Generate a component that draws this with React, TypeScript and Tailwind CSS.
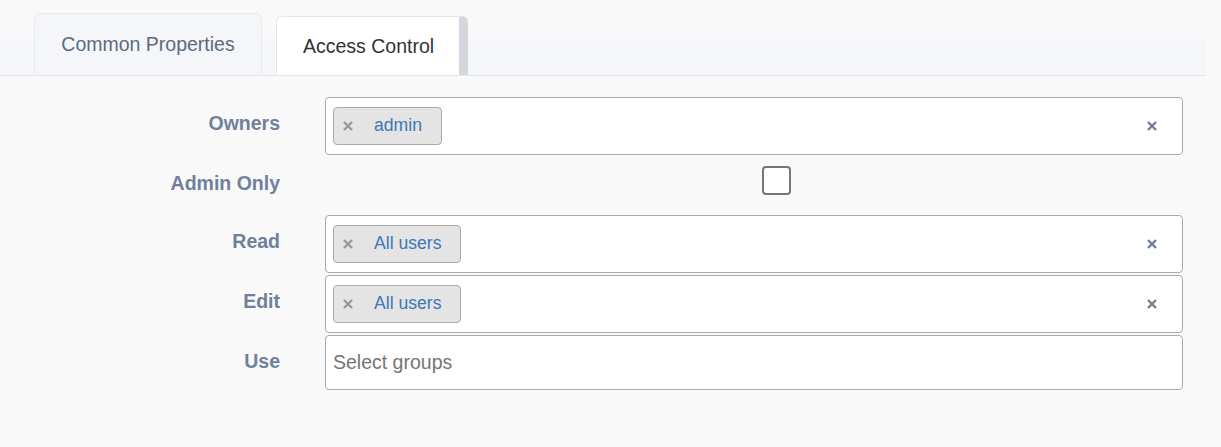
import React from "react";

const Cross: React.FC<{ className?: string; size?: number }> = ({
  className = "",
  size = 10,
}) => (
  <svg
    width={size}
    height={size}
    viewBox="0 0 10 10"
    className={className}
    fill="none"
    stroke="currentColor"
    strokeWidth={2.4}
    strokeLinecap="butt"
  >
    <path d="M1 1L9 9M9 1L1 9" />
  </svg>
);

interface TagProps {
  label: string;
}

const Tag: React.FC<TagProps> = ({ label }) => (
  <div className="flex h-[38px] items-center rounded-[4px] border border-[#aaaaaa] bg-[#e4e4e4] pl-[9px] pr-[19px]">
    <Cross size={10} className="text-[#999999]" />
    <span className="ml-[21px] text-[17.6px] leading-none text-[#3c78b5]">
      {label}
    </span>
  </div>
);

interface MultiSelectProps {
  tags?: string[];
  placeholder?: string;
}

const MultiSelect: React.FC<MultiSelectProps> = ({ tags = [], placeholder }) => (
  <div className="flex h-full w-[858px] items-center rounded-[4px] border border-[#aaaaaa] bg-white pl-[7px] pr-[25px]">
    {tags.length > 0 ? (
      <>
        <div className="flex flex-1 items-center gap-1">
          {tags.map((t) => (
            <Tag key={t} label={t} />
          ))}
        </div>
        <Cross size={10} className="text-[#6f819a]" />
      </>
    ) : (
      <span className="text-[19.5px] text-[#757575]">{placeholder}</span>
    )}
  </div>
);

const Label: React.FC<{ text: string; className?: string }> = ({
  text,
  className = "",
}) => (
  <div
    className={`w-[280px] shrink-0 text-right text-[19.5px] font-bold leading-none text-[#6f819a] ${className}`}
  >
    {text}
  </div>
);

const App: React.FC = () => {
  return (
    <div
      className="h-[447px] w-full bg-[#f9f9f9]"
      style={{ fontFamily: '"Liberation Sans", Arial, sans-serif' }}
    >
      {/* tabs */}
      <div className="pt-[13px]">
        <div className="flex h-[63px] w-[1206px] items-end border-b border-[#e3e6ea] bg-[linear-gradient(to_bottom,transparent_26px,#f4f6fa_26px)]">
          <div className="ml-[34px] flex h-[62px] w-[228px] items-center justify-center rounded-t-[6px] border-x border-t border-[#e6e9ee] bg-[#f4f6fa] text-[19.5px] text-[#5c6b7f]">
            Common Properties
          </div>
          <div className="ml-[14px] flex h-[59px] w-[192px] items-center rounded-t-[6px] border-l border-t border-r-[9px] border-l-[#e3e6ea] border-t-[#e3e6ea] border-r-[#d3d6da] bg-white pl-[26px] pt-[2px] text-[19.5px] text-[#333333]">
            Access Control
          </div>
        </div>
      </div>

      {/* form */}
      <div className="pt-[21px]">
        <div className="flex h-[58px]">
          <Label text="Owners" className="pt-[17px]" />
          <div className="ml-[45px]">
            <MultiSelect tags={["admin"]} />
          </div>
        </div>

        <div className="flex h-[60px]">
          <Label text="Admin Only" className="pt-[19px]" />
          <div className="ml-[45px] flex w-[858px] justify-center pl-[44px] pt-[11px]">
            <div className="h-[29px] w-[29px] rounded-[4px] border-2 border-[#767676] bg-white" />
          </div>
        </div>

        <div className="flex h-[58px]">
          <Label text="Read" className="pt-[17px]" />
          <div className="ml-[45px]">
            <MultiSelect tags={["All users"]} />
          </div>
        </div>

        <div className="mt-[2px] flex h-[58px]">
          <Label text="Edit" className="pt-[17px]" />
          <div className="ml-[45px]">
            <MultiSelect tags={["All users"]} />
          </div>
        </div>

        <div className="mt-[2px] flex h-[55px]">
          <Label text="Use" className="pt-[17px]" />
          <div className="ml-[45px]">
            <MultiSelect placeholder="Select groups" />
          </div>
        </div>
      </div>
    </div>
  );
};

export default App;
